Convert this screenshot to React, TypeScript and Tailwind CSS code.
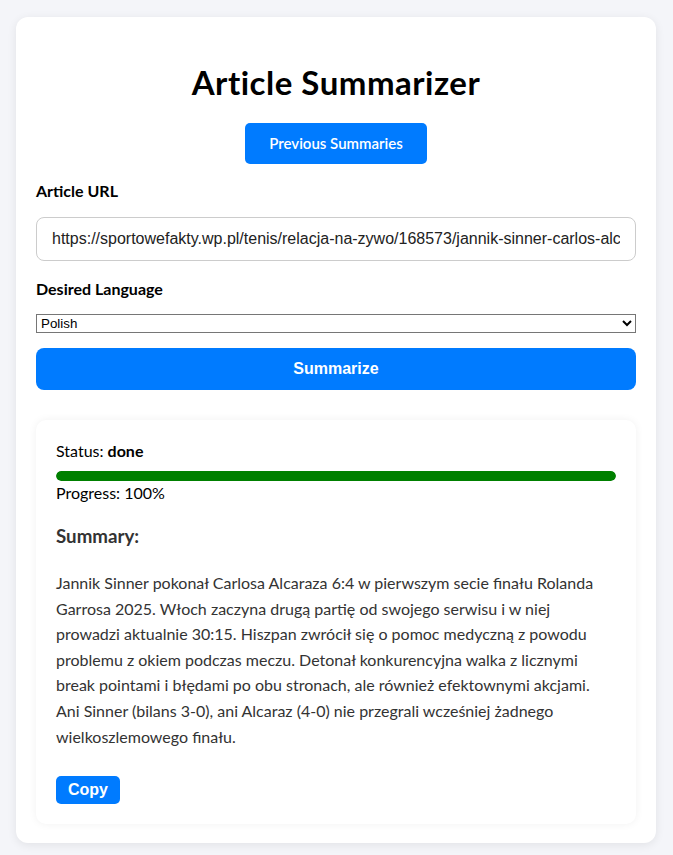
import React, { useState } from 'react';

const summaryText =
  'Jannik Sinner pokonał Carlosa Alcaraza 6:4 w pierwszym secie finału Rolanda Garrosa 2025. Włoch zaczyna drugą partię od swojego serwisu i w niej prowadzi aktualnie 30:15. Hiszpan zwrócił się o pomoc medyczną z powodu problemu z okiem podczas meczu. Detonał konkurencyjna walka z licznymi break pointami i błędami po obu stronach, ale również efektownymi akcjami. Ani Sinner (bilans 3-0), ani Alcaraz (4-0) nie przegrali wcześniej żadnego wielkoszlemowego finału.';

const App: React.FC = () => {
  const [url, setUrl] = useState(
    'https://sportowefakty.wp.pl/tenis/relacja-na-zywo/168573/jannik-sinner-carlos-alcaraz-final-roland-garros-2025'
  );
  const [language, setLanguage] = useState('Polish');

  return (
    <div className="min-h-screen bg-[#f4f5f9] pt-[17px] pb-[12px] font-['Lato','Noto_Sans',sans-serif] text-black">
      <div className="ml-[16px] w-[640px] rounded-[12px] bg-white px-[20px] pt-[20px] pb-[19px] shadow-[0_2px_10px_rgba(0,0,0,0.08)]">
        {/* Header */}
        <h1 className="mt-[26px] text-center text-[33px] font-bold leading-[38px] tracking-[0.5px]">
          Article Summarizer
        </h1>
        <div className="mt-[22px] flex justify-center">
          <button
            type="button"
            className="h-[41px] rounded-[5px] bg-[#007bff] px-[24px] text-[15px] font-semibold text-white"
          >
            Previous Summaries
          </button>
        </div>

        {/* Form */}
        <label className="mt-[14px] block text-[16px] font-bold leading-[26px]">Article URL</label>
        <input
          type="text"
          value={url}
          onChange={(e) => setUrl(e.target.value)}
          className="mt-[13px] block h-[44px] w-full rounded-[8px] border border-[#cccccc] px-[15px] font-['Liberation_Sans',Arial,sans-serif] text-[16px] text-[#222] outline-none"
        />

        <label className="mt-[15px] block text-[16px] font-bold leading-[26px]">Desired Language</label>
        <select
          value={language}
          onChange={(e) => setLanguage(e.target.value)}
          className="mt-[12px] block h-[19px] w-full border border-[#767676] bg-white font-['Liberation_Sans',Arial,sans-serif] text-[13.33px] text-black"
        >
          <option>Polish</option>
          <option>English</option>
          <option>German</option>
        </select>

        <button
          type="button"
          className="mt-[15px] block h-[42px] w-full rounded-[8px] bg-[#007bff] font-['Liberation_Sans',Arial,sans-serif] text-[16px] font-bold text-white"
        >
          Summarize
        </button>

        {/* Result */}
        <div className="mt-[30px] rounded-[10px] bg-white px-[20px] pt-[18px] pb-[20px] shadow-[0_0_8px_rgba(0,0,0,0.06)]">
          <p className="text-[16px] leading-[26px]">
            Status: <strong>done</strong>
          </p>
          <div className="mt-[7px] h-[10px] w-full overflow-hidden rounded-full bg-[#e5e5e5]">
            <div className="h-full rounded-full bg-[#008000]" style={{ width: '100%' }} />
          </div>
          <p className="text-[16px] leading-[24px]">Progress: 100%</p>

          <h3 className="mt-[16px] text-[18.72px] font-bold leading-[30px] text-[#333]">Summary:</h3>
          <p className="mt-[19px] text-[16px] leading-[25.6px] text-[#333]">{summaryText}</p>

          <button
            type="button"
            className="mt-[27px] h-[28px] rounded-[5px] bg-[#007bff] px-[12px] font-['Liberation_Sans',Arial,sans-serif] text-[16px] font-bold text-white"
          >
            Copy
          </button>
        </div>
      </div>
    </div>
  );
};

export default App;
